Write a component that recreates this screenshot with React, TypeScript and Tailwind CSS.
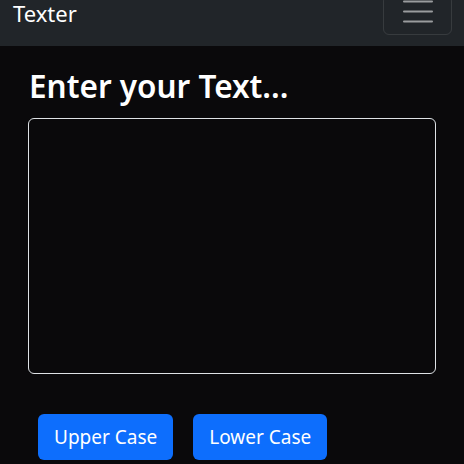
import { useState } from 'react';

const font = { fontFamily: '"Noto Sans", "Open Sans", sans-serif' };

function Navbar() {
  return (
    <nav className="bg-[#212529] h-[46px] flex items-end justify-between pl-[13px] pr-[12px] pb-[11px] overflow-hidden">
      <a className="text-white text-[22px] leading-[22px] mb-[11px]" href="#">
        Texter
      </a>
      <button className="w-[69px] h-[40px] shrink-0 border border-[rgba(255,255,255,0.1)] rounded-[6px] flex items-center justify-center">
        <svg width="30" height="30" viewBox="0 0 30 30">
          <path
            d="M1 1.5h28M1 11.5h28M1 21.5h28"
            stroke="rgba(255,255,255,0.55)"
            strokeWidth="2"
            strokeLinecap="round"
          />
        </svg>
      </button>
    </nav>
  );
}

export default function App() {
  const [text, setText] = useState('');

  const btn = 'bg-[#0d6efd] text-white text-[19px] leading-[30px] px-4 py-2 rounded-[6px] mx-[10px]';

  return (
    <div className="min-h-screen bg-[#0a090b] overflow-hidden" style={font}>
      <Navbar />
      <div className="px-[28px] pt-[18px]">
        <h1 className="text-white text-[31.5px] font-semibold leading-[44px] mb-[10px] pl-[1px]">
          Enter your Text...
        </h1>
        <textarea
          className="w-full h-[256px] bg-[#0a090b] text-white border border-[#dee2e6] rounded-[6px] px-3 py-1.5 resize-none outline-none block"
          value={text}
          onChange={(e) => setText(e.target.value)}
        />
        <div className="flex mt-[40px]">
          <button className={btn}>Upper Case</button>
          <button className={btn}>Lower Case</button>
        </div>
      </div>
    </div>
  );
}
